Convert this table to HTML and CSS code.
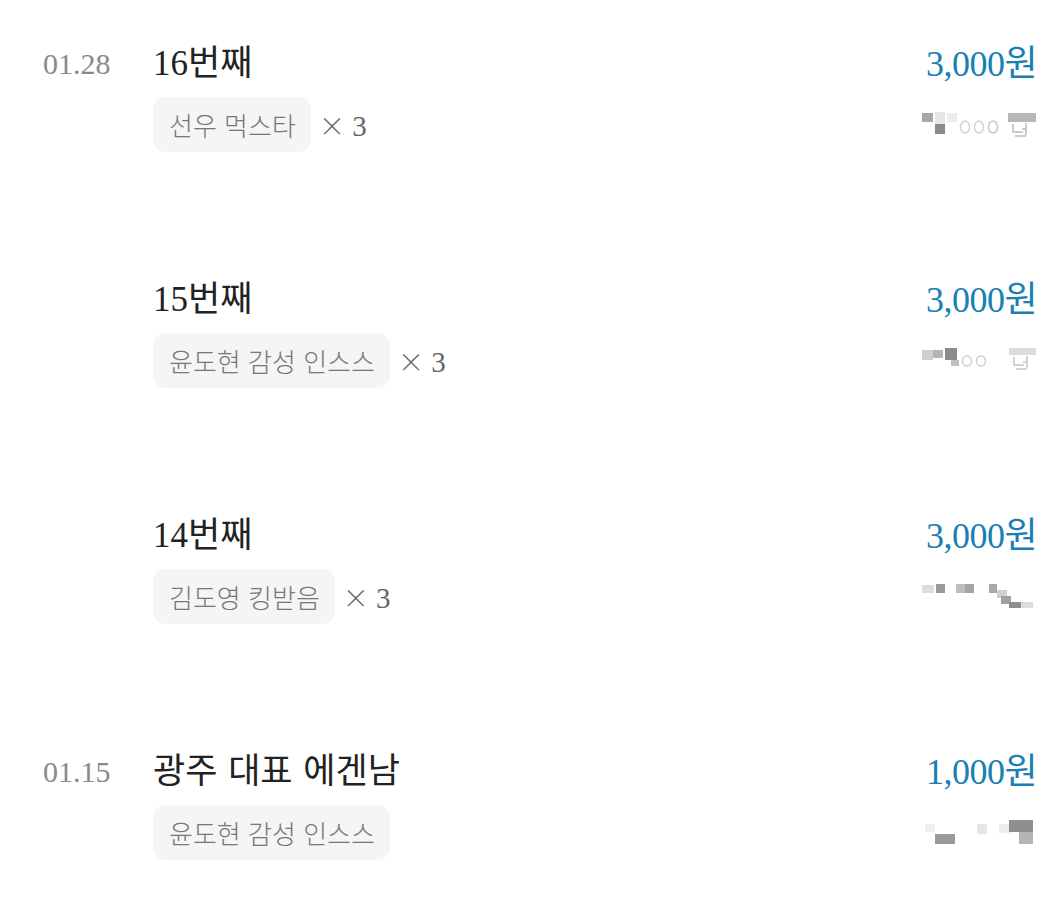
FILE: index.html
```html
<!DOCTYPE html>
<html lang="ko">
<head>
<meta charset="utf-8">
<link rel="stylesheet" href="styles.css">
</head>
<body>
<div class="list">
  <div class="row">
    <div class="date">01.28</div>
    <div class="main">
      <div class="title">16번째</div>
      <div class="meta"><span class="chip">선우 먹스타</span><span class="qty"><span class="x">×</span> 3</span></div>
    </div>
    <div class="side">
      <div class="amount">3,000원</div>
      <svg class="blur" width="116" height="28" viewBox="0 0 116 28">
        <rect x="1" y="1" width="11" height="9" fill="#a8a8a8"/>
        <rect x="14" y="0" width="10" height="12" fill="#e6e6e6"/>
        <rect x="14" y="12" width="10" height="10" fill="#8a8a8a"/>
        <rect x="26" y="1" width="10" height="9" fill="#ededed"/>
        <ellipse cx="44" cy="15" rx="4.5" ry="6" fill="none" stroke="#d4d4d4" stroke-width="1.5"/>
        <ellipse cx="58" cy="15" rx="4.5" ry="6" fill="none" stroke="#d4d4d4" stroke-width="1.5"/>
        <ellipse cx="72" cy="15" rx="4.5" ry="6" fill="none" stroke="#c8c8c8" stroke-width="1.5"/>
        <rect x="87" y="1" width="28" height="9" fill="#b8b8b8"/>
        <path d="M92 12 v8 h10 M105 11 v12 M105 17 h-4 M94 24 h11" fill="none" stroke="#bcbcbc" stroke-width="1.5"/>
      </svg>
    </div>
  </div>

  <div class="row">
    <div class="date"></div>
    <div class="main">
      <div class="title">15번째</div>
      <div class="meta"><span class="chip">윤도현 감성 인스스</span><span class="qty"><span class="x">×</span> 3</span></div>
    </div>
    <div class="side">
      <div class="amount">3,000원</div>
      <svg class="blur" width="116" height="28" viewBox="0 0 116 28">
        <rect x="1" y="2" width="11" height="10" fill="#cfcfcf"/>
        <rect x="12" y="2" width="10" height="8" fill="#b5b5b5"/>
        <rect x="24" y="0" width="12" height="12" fill="#8c8c8c"/>
        <rect x="30" y="12" width="8" height="6" fill="#c0c0c0"/>
        <ellipse cx="46" cy="13" rx="4.5" ry="5" fill="none" stroke="#cfcfcf" stroke-width="1.5"/>
        <ellipse cx="60" cy="13" rx="4.5" ry="5" fill="none" stroke="#cfcfcf" stroke-width="1.5"/>
        <rect x="88" y="0" width="27" height="7" fill="#dcdcdc"/>
        <path d="M93 9 v8 h10 M106 8 v12 M106 14 h-4 M95 21 h11" fill="none" stroke="#c4c4c4" stroke-width="1.5"/>
      </svg>
    </div>
  </div>

  <div class="row">
    <div class="date"></div>
    <div class="main">
      <div class="title">14번째</div>
      <div class="meta"><span class="chip">김도영 킹받음</span><span class="qty"><span class="x">×</span> 3</span></div>
    </div>
    <div class="side">
      <div class="amount">3,000원</div>
      <svg class="blur" width="116" height="28" viewBox="0 0 116 28">
        <rect x="1" y="1" width="12" height="8" fill="#dedede"/>
        <rect x="15" y="0" width="9" height="9" fill="#9a9a9a"/>
        <rect x="35" y="0" width="9" height="9" fill="#bdbdbd"/>
        <rect x="44" y="0" width="9" height="9" fill="#a6a6a6"/>
        <rect x="68" y="0" width="8" height="9" fill="#a8a8a8"/>
        <rect x="76" y="6" width="10" height="8" fill="#d0d0d0"/>
        <rect x="80" y="12" width="10" height="8" fill="#a0a0a0"/>
        <rect x="88" y="18" width="12" height="6" fill="#8e8e8e"/>
        <rect x="100" y="18" width="12" height="6" fill="#dcdcdc"/>
      </svg>
    </div>
  </div>

  <div class="row">
    <div class="date">01.15</div>
    <div class="main">
      <div class="title">광주 대표 에겐남</div>
      <div class="meta"><span class="chip">윤도현 감성 인스스</span></div>
    </div>
    <div class="side">
      <div class="amount">1,000원</div>
      <svg class="blur" width="116" height="28" viewBox="0 0 116 28">
        <rect x="4" y="4" width="10" height="8" fill="#f0f0f0"/>
        <rect x="14" y="14" width="20" height="10" fill="#9a9a9a"/>
        <rect x="56" y="4" width="10" height="10" fill="#e6e6e6"/>
        <rect x="78" y="4" width="12" height="9" fill="#ededed"/>
        <rect x="88" y="0" width="24" height="12" fill="#8f8f8f"/>
        <rect x="98" y="12" width="14" height="12" fill="#b4b4b4"/>
      </svg>
    </div>
  </div>
</div>
</body>
</html>
```

FILE: styles.css
```css
html, body {
  margin: 0;
  padding: 0;
  background: #ffffff;
}

body {
  width: 1052px;
  height: 918px;
  overflow: hidden;
}

.list {
  display: flex;
  flex-direction: column;
  gap: 126px;
  padding: 42px 15px 0 43px;
}

.row {
  display: grid;
  grid-template-columns: 110px 1fr auto;
  align-items: start;
}

.date {
  height: 44px;
  line-height: 44px;
  font-family: "Liberation Serif", "Noto Sans CJK KR", serif;
  font-size: 30px;
  color: #8a8a8a;
}

.main {
  display: flex;
  flex-direction: column;
  gap: 11px;
}

.title {
  height: 44px;
  line-height: 44px;
  font-family: "Liberation Serif", "Noto Sans CJK KR", serif;
  font-size: 35px;
  color: #222222;
  word-spacing: 2px;
}

.meta {
  display: flex;
  align-items: center;
  gap: 8px;
  height: 55px;
}

.chip {
  display: inline-flex;
  align-items: center;
  height: 55px;
  padding: 0 15px 0 16px;
  background: #f5f5f5;
  border-radius: 13px;
  font-family: "Noto Sans CJK KR", sans-serif;
  font-weight: 300;
  font-size: 26px;
  color: #777777;
  box-sizing: border-box;
}

.qty {
  font-family: "Liberation Serif", "Noto Sans CJK KR", serif;
  font-size: 29px;
  color: #666666;
}

.x {
  font-family: "Noto Sans CJK KR", sans-serif;
  font-weight: 300;
  font-size: 26px;
}

.side {
  display: flex;
  flex-direction: column;
  align-items: flex-end;
  gap: 26px;
}

.amount {
  height: 44px;
  line-height: 44px;
  font-family: "Liberation Serif", "Noto Sans CJK KR", serif;
  font-size: 36px;
  color: #1a7fb3;
  letter-spacing: -0.5px;
}

.blur {
  display: block;
}
```
